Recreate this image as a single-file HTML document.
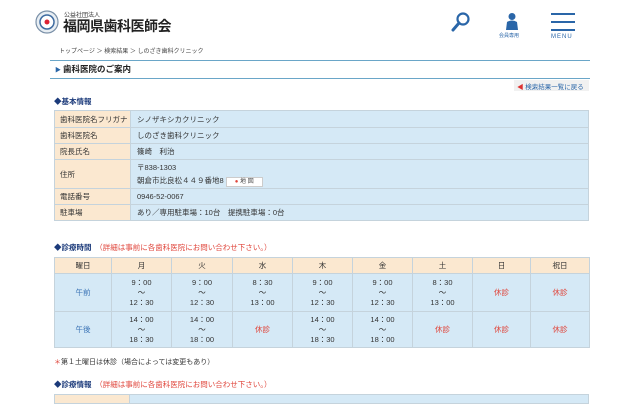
<!DOCTYPE html>
<html><head><meta charset="utf-8"><style>
*{margin:0;padding:0;box-sizing:border-box}
body{width:640px;height:400px;overflow:hidden;background:#fff;font-family:"Liberation Sans","Noto Sans CJK JP",sans-serif;color:#333;position:relative}
.a{position:absolute}
table{border-collapse:collapse;position:absolute;table-layout:fixed}
td{border:1px solid #c5d3dc;font-size:7.5px;padding:0 5px;white-space:nowrap}
.l{background:#fbe8d0;width:76px}
.v{background:#d5e9f6;padding-left:6px}
.s td{text-align:center;background:#d5e9f6;line-height:10px;padding:0}
.s tr:first-child td{background:#fbe8d0;height:16px}
.r{color:#e0463c}
.b{color:#3a73b5}
h3{position:absolute;font-size:7.5px;color:#1b3a7a;font-weight:bold}
</style></head><body>
<svg class="a" style="left:35px;top:10px" width="24" height="24" viewBox="0 0 24 24"><circle cx="12" cy="12" r="11" fill="#e8eef3" stroke="#7a90a8" stroke-width="1.2"/><circle cx="12" cy="12" r="7" fill="#fff" stroke="#3d6aa0" stroke-width="1.5"/><circle cx="12" cy="12" r="2.5" fill="#d23"/></svg>
<div class="a" style="left:64px;top:10px;font-size:6px">公益社団法人</div>
<div class="a" style="left:63px;top:16px;font-size:14px;font-weight:bold;color:#222;letter-spacing:-0.5px">福岡県歯科医師会</div>
<svg class="a" style="left:450px;top:11px" width="22" height="22" viewBox="0 0 22 22"><circle cx="13" cy="8" r="5.5" fill="none" stroke="#2a66a8" stroke-width="2.2"/><line x1="9" y1="12" x2="3" y2="19" stroke="#2a66a8" stroke-width="3" stroke-linecap="round"/></svg>
<svg class="a" style="left:505px;top:12px" width="14" height="18" viewBox="0 0 14 18"><circle cx="7" cy="4.5" r="3.5" fill="#2a66a8"/><path d="M1 18 L2 10 Q7 7 12 10 L13 18Z" fill="#2a66a8"/></svg>
<div class="a" style="left:499px;top:32px;font-size:5px;color:#2a66a8">会員専用</div>
<div class="a" style="left:551px;top:13px;width:24px;height:2px;background:#2a66a8"></div>
<div class="a" style="left:551px;top:21px;width:24px;height:2px;background:#2a66a8"></div>
<div class="a" style="left:551px;top:29px;width:24px;height:2px;background:#2a66a8"></div>
<div class="a" style="left:551px;top:34px;font-size:6px;color:#2a66a8;letter-spacing:1px">MENU</div>
<div class="a" style="left:59px;top:46px;font-size:6px;color:#444">トップページ ＞ 検索結果 ＞ しのざき歯科クリニック</div>
<div class="a" style="left:50px;top:60px;width:540px;height:19px;border-top:1.5px solid #6aa6c8;border-bottom:1.5px solid #6aa6c8"></div>
<div class="a" style="left:55px;top:65px;font-size:6px;color:#2a66a8">▶</div>
<div class="a" style="left:63px;top:63px;font-size:8.5px;font-weight:bold;color:#222">歯科医院のご案内</div>
<div class="a" style="left:514px;top:80px;width:75px;height:11px;background:#f1f1f1;font-size:6.5px;color:#2a66a8;padding:1px 0 0 3px"><span style="color:#d33">◀</span> 検索結果一覧に戻る</div>
<h3 style="left:54px;top:96px">◆基本情報</h3>
<table style="left:54px;top:110px;width:535px">
<colgroup><col style="width:76px"><col></colgroup>
<tr style="height:17px"><td class="l">歯科医院名フリガナ</td><td class="v">シノザキシカクリニック</td></tr>
<tr style="height:16px"><td class="l">歯科医院名</td><td class="v">しのざき歯科クリニック</td></tr>
<tr style="height:16px"><td class="l">院長氏名</td><td class="v">篠崎　利治</td></tr>
<tr style="height:29px"><td class="l">住所</td><td class="v" style="line-height:13px">〒838-1303<br>朝倉市比良松４４９番地8 <span style="display:inline-block;background:#fff;border:1px solid #ccc;font-size:6px;line-height:8px;padding:0 8px;color:#444"><span class="r">●</span> 地 図</span></td></tr>
<tr style="height:16px"><td class="l">電話番号</td><td class="v">0946-52-0067</td></tr>
<tr style="height:16px"><td class="l">駐車場</td><td class="v">あり／専用駐車場：10台　提携駐車場：0台</td></tr>
</table>
<h3 style="left:54px;top:242px">◆診療時間　<span class="r" style="font-weight:normal">（詳細は事前に各歯科医院にお問い合わせ下さい。）</span></h3>
<table class="s" style="left:54px;top:257px;width:535px">
<colgroup><col style="width:57px"><col style="width:60px"><col style="width:61px"><col style="width:60px"><col style="width:60px"><col style="width:60px"><col style="width:60px"><col style="width:58px"><col style="width:59px"></colgroup>
<tr><td>曜日</td><td>月</td><td>火</td><td>水</td><td>木</td><td>金</td><td>土</td><td>日</td><td>祝日</td></tr>
<tr style="height:38px"><td class="b">午前</td><td>9：00<br>～<br>12：30</td><td>9：00<br>～<br>12：30</td><td>8：30<br>～<br>13：00</td><td>9：00<br>～<br>12：30</td><td>9：00<br>～<br>12：30</td><td>8：30<br>～<br>13：00</td><td class="r">休診</td><td class="r">休診</td></tr>
<tr style="height:36px"><td class="b">午後</td><td>14：00<br>～<br>18：30</td><td>14：00<br>～<br>18：00</td><td class="r">休診</td><td>14：00<br>～<br>18：30</td><td>14：00<br>～<br>18：00</td><td class="r">休診</td><td class="r">休診</td><td class="r">休診</td></tr>
</table>
<div class="a" style="left:54px;top:357px;font-size:7px"><span class="r">＊</span>第１土曜日は休診（場合によっては変更もあり）</div>
<h3 style="left:54px;top:379px">◆診療情報　<span class="r" style="font-weight:normal">（詳細は事前に各歯科医院にお問い合わせ下さい。）</span></h3>
<div class="a" style="left:54px;top:394px;width:535px;height:10px;background:#d5e9f6;border:1px solid #c5d3dc"><div style="width:75px;height:100%;background:#fbe8d0;border-right:1px solid #c5d3dc"></div></div>
</body></html>
